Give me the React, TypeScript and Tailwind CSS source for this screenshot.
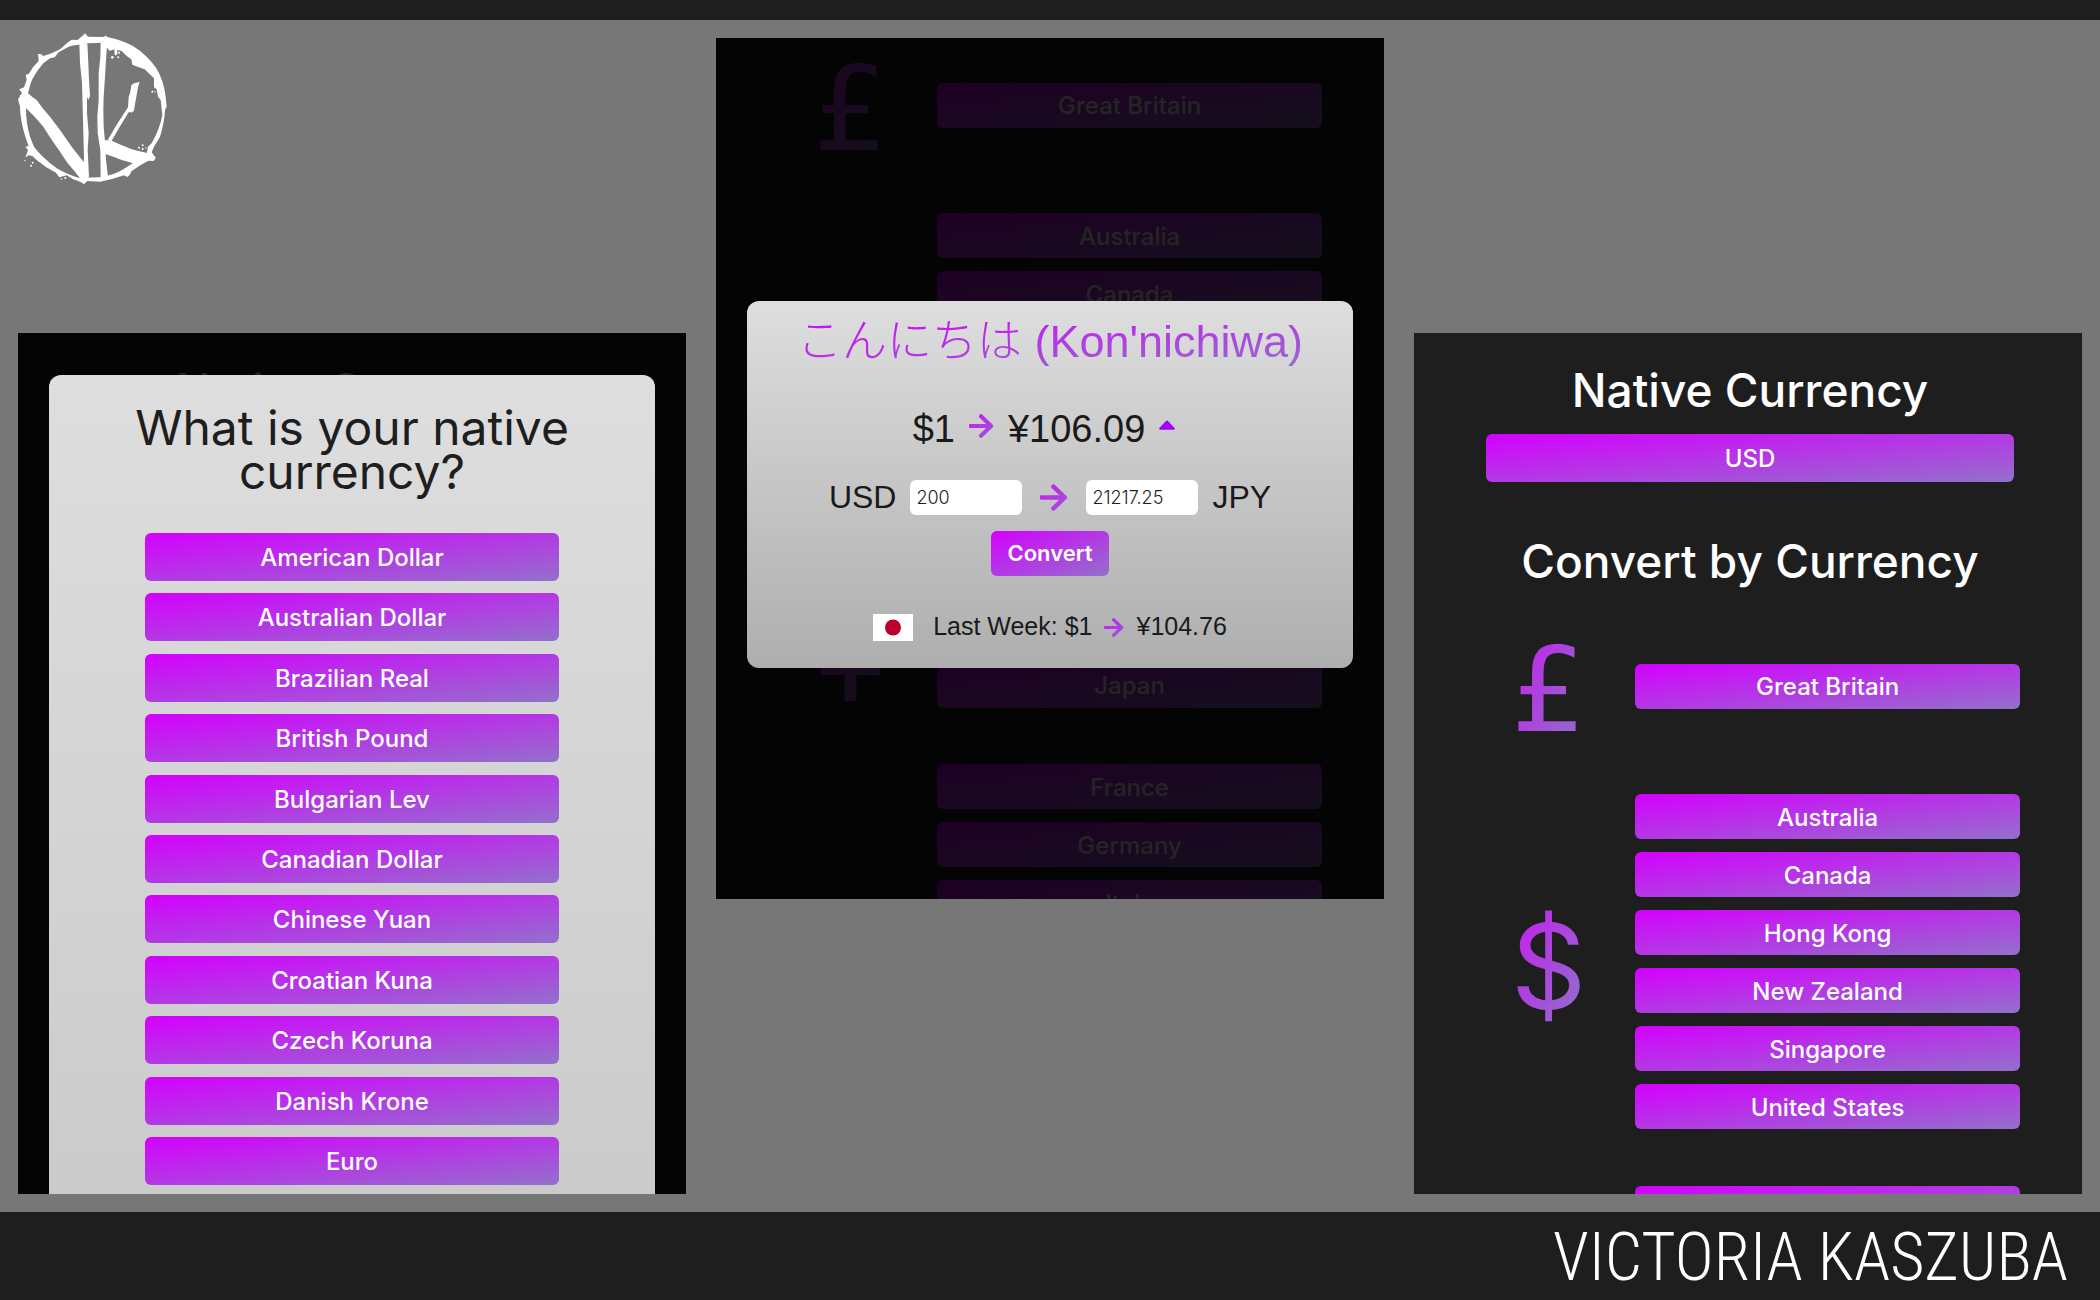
import { useId, type ReactNode } from "react";

const currencies = [
  "American Dollar",
  "Australian Dollar",
  "Brazilian Real",
  "British Pound",
  "Bulgarian Lev",
  "Canadian Dollar",
  "Chinese Yuan",
  "Croatian Kuna",
  "Czech Koruna",
  "Danish Krone",
  "Euro",
];

const groups = [
  { symbol: "£", font: "font-['DejaVu_Sans',sans-serif]", countries: ["Great Britain"] },
  {
    symbol: "$",
    font: "font-['Inter',sans-serif]",
    countries: ["Australia", "Canada", "Hong Kong", "New Zealand", "Singapore", "United States"],
  },
  { symbol: "¥", font: "font-['DejaVu_Sans',sans-serif]", countries: ["China", "Japan"] },
  {
    symbol: "€",
    font: "font-['DejaVu_Sans',sans-serif]",
    countries: ["France", "Germany", "Italy", "Netherlands", "Portugal", "Slovakia", "Spain"],
  },
];

function Logo() {
  return (
    <svg viewBox="54 99 450 453" className="h-[151px] w-[150px]" fill="#fff" role="img" aria-label="VK logo">
      <path
        fillRule="evenodd"
        d="M232 120 246 109 255 100 264 110 310 111 317 107 324 112Q364 119 400 139 440 164 470 206 492 244 497 290L500 320 495 330Q494 365 480 410L462 440 455 457 467 473 462 482 445 482Q418 496 395 513L389 524 383 531 372 526Q340 538 300 545L262 543 252 552 240 545 220 538 200 526 178 532 168 518Q138 504 110 480L97 468 85 466 76 473 80 462 84 450 76 440 86 438 82 428Q66 385 61 340L60 320 54 298 66 280 58 268 72 262 80 240 77 224 86 222 100 200 116 183 114 162 122 162 130 168 155 160 180 148 205 126 215 119Z
        M237 134Q210 136 195 146L176 157 164 172 150 175 130 190Q100 226 92 250L84 280 78 328Q78 370 90 410L102 440Q124 470 170 505 205 525 235 533L300 532Q340 527 370 508L400 488 440 462 444 440 455 430Q480 385 487 345L482 300 474 290 470 268 462 262 462 235 446 220 434 208 412 200 397 194 394 178 380 168 365 153 345 148 328 152 310 128 260 130Z"
      />
      <path d="M60 285 84 280 98 292 110 300 128 325 150 350 180 390 215 440 248 482 256 490 262 540 252 551 240 535 225 515 202 488 180 455 150 412 130 380 104 350 80 326 60 312Z" />
      <path d="M238 130H262L265 190 267 240 270 288 265 300 261 290 261 340 266 400 263 450 267 530 248 545 252 470 250 400 246 250 240 190Z" />
      <path d="M302 125H322L318 180 315 230 311 290 310 330 311 380 315 424 318 480 324 532 302 535 301 450 293 400 292 350 296 300 296 220 301 170Z" />
      <path d="M323 420 350 374 384 322 386 292 391 275 394 256 402 250 419 246 414 262 408 296 404 318 402 332 394 338 387 335 362 376 334 424Z" />
      <path d="M313 420 335 422 362 434 395 448 425 455 445 460 467 472 460 482 430 478 400 490 365 480 340 470 316 462Z" />
      <path d="M343 145H352V160L348 167 344 163Z" />
      <circle cx="337" cy="172" r="4" />
      <circle cx="355" cy="172" r="3" />
      <circle cx="357" cy="158" r="3" />
      <circle cx="457" cy="275" r="3" />
      <circle cx="465" cy="275" r="2" />
      <circle cx="75" cy="482" r="2" />
      <circle cx="98" cy="488" r="3" />
      <circle cx="93" cy="497" r="3" />
      <circle cx="184" cy="537" r="2" />
      <circle cx="196" cy="534" r="3" />
      <circle cx="428" cy="436" r="3" />
      <circle cx="417" cy="443" r="3" />
      <circle cx="428" cy="447" r="3" />
      <circle cx="438" cy="444" r="2" />
    </svg>
  );
}

function Arrow({ className }: { className: string }) {
  const id = useId();
  return (
    <svg viewBox="0 0 25 24" className={className} aria-hidden="true">
      <defs>
        <linearGradient id={id} gradientUnits="userSpaceOnUse" x1="0" y1="0" x2="25" y2="24">
          <stop offset="0" stopColor="#c41bf2" />
          <stop offset="1" stopColor="#9f55da" />
        </linearGradient>
      </defs>
      <rect y="10" width="21" height="4" rx="1" fill={`url(#${id})`} />
      <path d="M12 2.2 22.2 12 12 21.8" fill="none" stroke={`url(#${id})`} strokeWidth="4" strokeLinecap="round" strokeLinejoin="round" />
    </svg>
  );
}

function GradientButton({ className, children }: { className: string; children: ReactNode }) {
  return (
    <button
      type="button"
      className={`rounded-md bg-linear-to-br/srgb from-[#d400ff] to-[#9370cb] pt-0.5 font-medium text-white ${className}`}
    >
      {children}
    </button>
  );
}

function Screen({ children }: { children: ReactNode }) {
  return <section className="relative aspect-[668/861] w-full overflow-hidden bg-[#1e1e1e]">{children}</section>;
}

function CurrencyGroups() {
  return (
    <div className="flex flex-col gap-14 pr-[62px] pl-12">
      {groups.map(({ symbol, font, countries }) => (
        <div key={symbol} className="grid min-h-[104px] grid-cols-[9fr_20fr] items-center">
          <div className={`-mt-3.5 -mb-[22px] flex justify-center text-[118px] leading-[140px] ${font}`}>
            <span className="bg-linear-to-br/srgb from-[#c818f2] to-[#9070c8] to-92% bg-clip-text text-transparent">
              {symbol}
            </span>
          </div>
          <div className="flex flex-col gap-[13px]">
            {countries.map((country) => (
              <GradientButton key={country} className="h-[45px] text-2xl">
                {country}
              </GradientButton>
            ))}
          </div>
        </div>
      ))}
    </div>
  );
}

function CurrencyPage() {
  return (
    <>
      <div className="mb-[51px] flex flex-col pt-[35px] pr-[68px] pl-[72px] text-center">
        <h2 className="text-[46px] leading-[44px] font-medium text-white">Native Currency</h2>
        <GradientButton className="mt-[22px] h-12 text-2xl">USD</GradientButton>
        <h2 className="mt-[57px] text-[46px] leading-[44px] font-medium text-white">Convert by Currency</h2>
      </div>
      <CurrencyGroups />
    </>
  );
}

function NativeCurrencyScreen() {
  return (
    <Screen>
      <CurrencyPage />
      <div className="absolute inset-0 flex flex-col bg-black/86 px-[31px] pt-[42px]">
        <div className="flex flex-1 flex-col rounded-t-xl bg-linear-to-b/srgb from-[#dedede] to-[#cbcbcb] px-24 pt-[31px] pb-[9px]">
          <h1 className="-mx-12 text-center text-[48px] leading-[44px] text-[#1e1e1e]">
            What is your native currency?
          </h1>
          <div className="mt-[39px] flex flex-1 flex-col justify-between">
            {currencies.map((name) => (
              <GradientButton key={name} className="h-12 text-2xl">
                {name}
              </GradientButton>
            ))}
          </div>
        </div>
      </div>
    </Screen>
  );
}

function ConversionScreen() {
  const field =
    "h-[35px] w-28 rounded-md bg-white px-1.5 font-['Inter',sans-serif] text-lg font-light text-[#1e1e1e]";
  return (
    <Screen>
      <div className="pt-[15px]">
        <CurrencyGroups />
      </div>
      <div className="absolute inset-0 bg-black/86 px-[31px] pt-[263px]">
        <div className="flex flex-col items-center rounded-xl bg-linear-to-b/srgb from-[#dedede] to-[#aeaeae] px-8 pt-3.5 pb-[27px] font-['Liberation_Sans','Noto_Sans_CJK_JP',sans-serif] text-[#1a1a1a]">
          <h2 className="h-[52px] w-full bg-linear-to-br/srgb from-[#d400ff] to-[#9370cb] bg-clip-text text-center text-[45px] leading-[50px] whitespace-nowrap text-transparent">
            <span className="font-['Noto_Sans_CJK_JP',sans-serif] leading-none font-light">こんにちは</span> (Kon'nichiwa)
          </h2>
          <p className="mt-[41px] flex items-center gap-3.5 pr-3 text-[38px] leading-[42px]">
            <span>$1</span>
            <Arrow className="mb-1.5 h-6 w-[25px]" />
            <span>¥106.09</span>
            <svg viewBox="0 0 16 10" className="mb-2 h-2.5 w-4" fill="#a200ff" aria-hidden="true">
              <path d="M7.2.8Q8 .2 8.8.8L15.6 8Q16.2 9.6 14.8 9.8H1.2Q-.2 9.6.4 8Z" />
            </svg>
          </p>
          <form className="mt-[30px] flex flex-col items-center gap-4" onSubmit={(e) => e.preventDefault()}>
            <div className="flex items-center gap-3.5 text-[32px] leading-[35px]">
              <label htmlFor="from-amount">USD</label>
              <input id="from-amount" className={field} defaultValue="200" />
              <Arrow className="mx-1 h-[27px] w-7" />
              <input id="to-amount" className={field} defaultValue="21217.25" />
              <label htmlFor="to-amount">JPY</label>
            </div>
            <button
              type="submit"
              className="h-[45px] rounded-md bg-linear-to-br/srgb from-[#d400ff] to-[#9370cb] px-4 font-['Inter',sans-serif] text-[22px] font-semibold text-white"
            >
              Convert
            </button>
          </form>
          <div className="mt-[34px] flex items-center gap-5 text-[25px] leading-7">
            <svg viewBox="0 0 40 27" className="mt-1 h-[27px] w-10" role="img" aria-label="Flag of Japan">
              <rect width="40" height="27" fill="#fff" />
              <circle cx="20" cy="13.5" r="8" fill="#bc002d" />
            </svg>
            <p className="flex items-center gap-3">
              <span>Last Week: $1</span>
              <Arrow className="mt-1 h-[19px] w-5" />
              <span>¥104.76</span>
            </p>
          </div>
        </div>
      </div>
    </Screen>
  );
}

export default function App() {
  return (
    <div className="flex min-h-screen flex-col bg-[#777] font-['Inter',sans-serif]">
      <header className="h-5 bg-[#1e1e1e]" />
      <main className="grid flex-1 grid-cols-3 gap-[30px] px-[18px] pt-[13px] pb-[18px]">
        <div className="flex flex-col justify-between">
          <Logo />
          <NativeCurrencyScreen />
        </div>
        <div className="pt-[5px]">
          <ConversionScreen />
        </div>
        <div className="flex flex-col justify-end">
          <Screen>
            <CurrencyPage />
          </Screen>
        </div>
      </main>
      <footer className="flex h-[88px] items-center justify-end bg-[#1e1e1e] pt-1 pr-8">
        <p className="font-['Roboto_Condensed',sans-serif] text-[66px] leading-[84px] font-light text-white">
          VICTORIA KASZUBA
        </p>
      </footer>
    </div>
  );
}
